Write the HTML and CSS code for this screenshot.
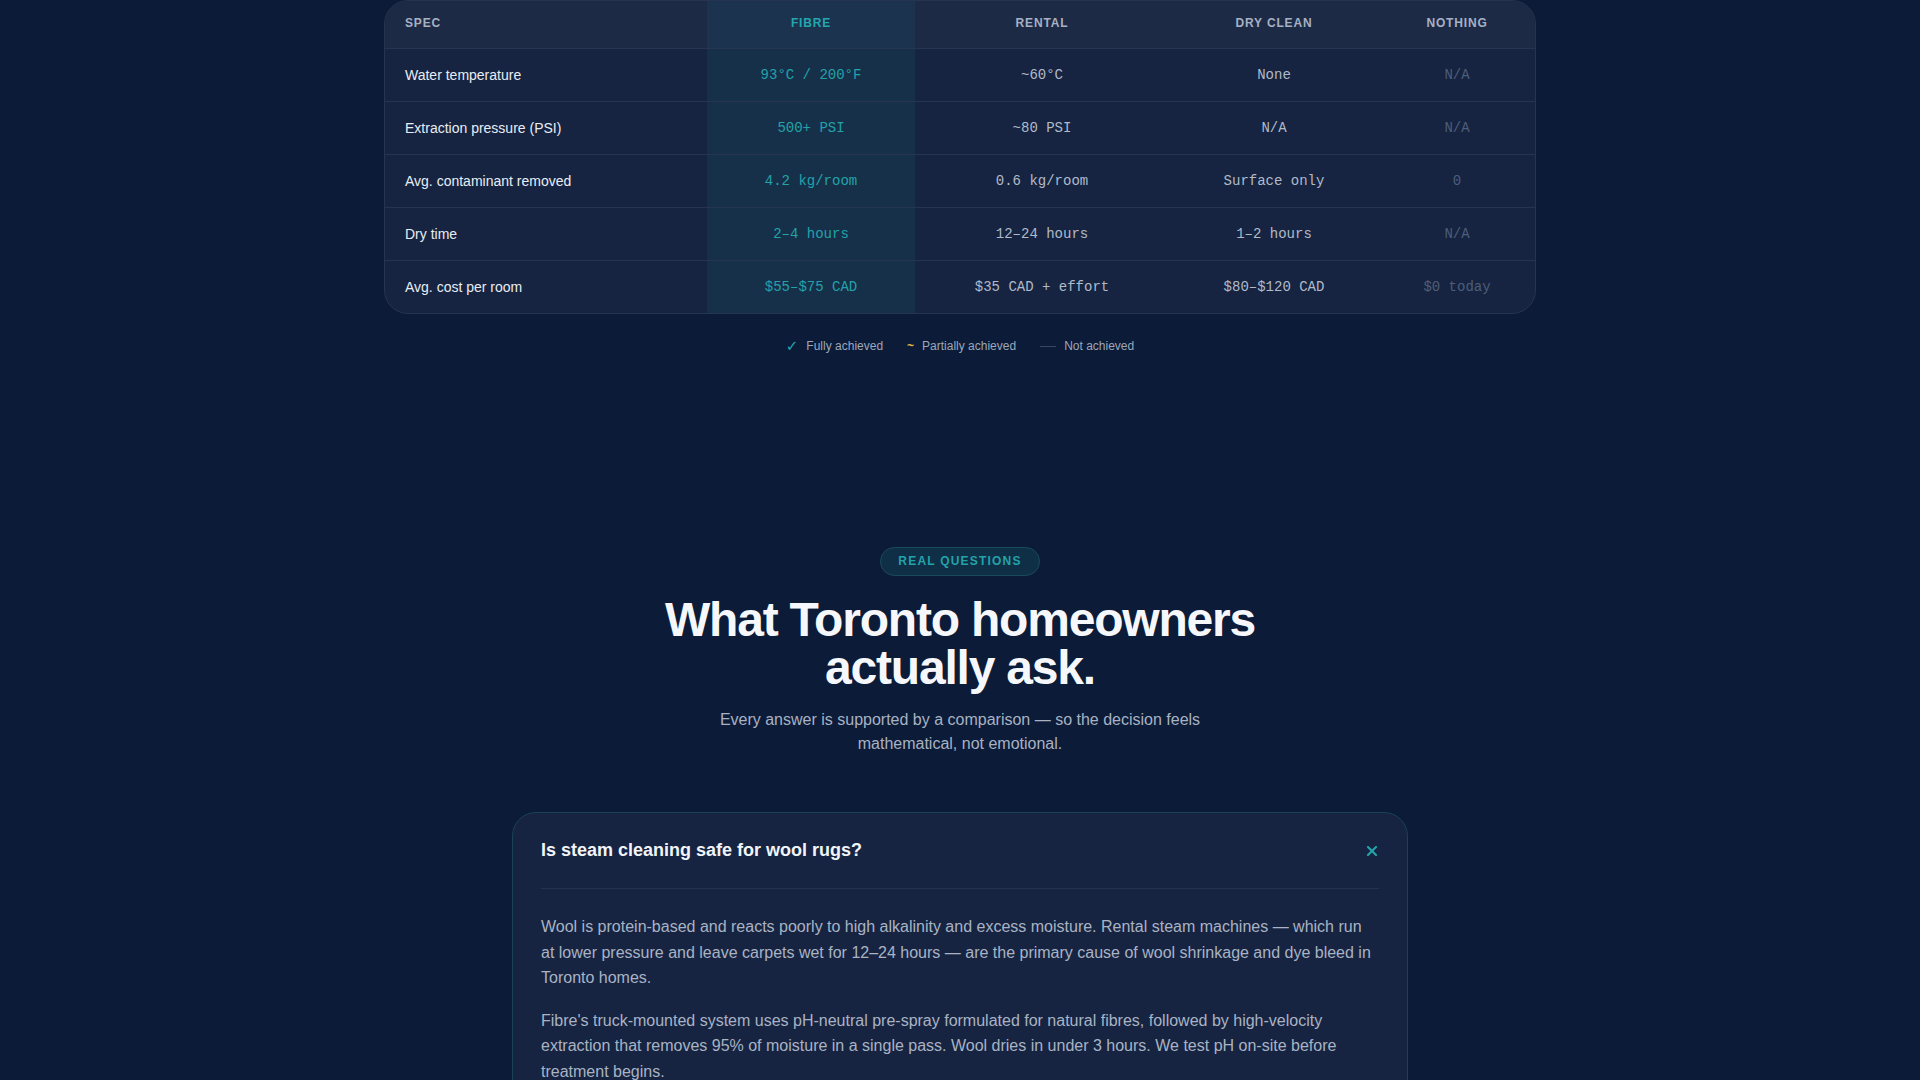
FILE: index.html
```html
<!DOCTYPE html>
<html lang="en">
<head>
  <meta charset="utf-8" />
  <meta name="viewport" content="width=device-width,initial-scale=1" />
  <title>Fibre — Compare &amp; FAQ</title>
  <link rel="stylesheet" href="styles.css">
</head>
<body>
  <!-- Spec comparison -->
  <section class="compare">
    <div class="table-wrap">
      <table class="spec-table">
        <colgroup>
          <col class="c-spec"><col class="c-fibre"><col class="c-rental"><col class="c-dry"><col class="c-none">
        </colgroup>
        <thead>
          <tr>
            <th class="spec">Spec</th>
            <th class="fib">Fibre</th>
            <th>Rental</th>
            <th>Dry clean</th>
            <th>Nothing</th>
          </tr>
        </thead>
        <tbody>
          <tr>
            <td class="spec">Water temperature</td>
            <td class="fib">93°C / 200°F</td>
            <td>~60°C</td>
            <td>None</td>
            <td class="dim">N/A</td>
          </tr>
          <tr>
            <td class="spec">Extraction pressure (PSI)</td>
            <td class="fib">500+ PSI</td>
            <td>~80 PSI</td>
            <td>N/A</td>
            <td class="dim">N/A</td>
          </tr>
          <tr>
            <td class="spec">Avg. contaminant removed</td>
            <td class="fib">4.2 kg/room</td>
            <td>0.6 kg/room</td>
            <td>Surface only</td>
            <td class="dim">0</td>
          </tr>
          <tr>
            <td class="spec">Dry time</td>
            <td class="fib">2–4 hours</td>
            <td>12–24 hours</td>
            <td>1–2 hours</td>
            <td class="dim">N/A</td>
          </tr>
          <tr>
            <td class="spec">Avg. cost per room</td>
            <td class="fib">$55–$75 CAD</td>
            <td>$35 CAD + effort</td>
            <td>$80–$120 CAD</td>
            <td class="dim">$0 today</td>
          </tr>
        </tbody>
      </table>
    </div>

    <div class="legend">
      <span class="legend-item"><span class="mark full">✓</span>Fully achieved</span>
      <span class="legend-item"><span class="mark part">~</span>Partially achieved</span>
      <span class="legend-item"><span class="mark none"></span>Not achieved</span>
    </div>
  </section>

  <!-- FAQ -->
  <section class="faq">
    <div class="faq-head">
      <span class="badge">Real questions</span>
      <h2>What Toronto homeowners<br>actually ask.</h2>
      <p class="lead">Every answer is supported by a comparison — so the decision feels mathematical, not emotional.</p>
    </div>

    <div class="faq-item open">
      <div class="faq-q">
        <h3>Is steam cleaning safe for wool rugs?</h3>
        <button class="faq-toggle" aria-label="Close">
          <svg width="10" height="10" viewBox="0 0 10 10"><path d="M1 1L9 9M9 1L1 9" stroke="currentColor" stroke-width="2" stroke-linecap="square"/></svg>
        </button>
      </div>
      <div class="faq-a">
        <p>Wool is protein-based and reacts poorly to high alkalinity and excess moisture. Rental steam machines — which run at lower pressure and leave carpets wet for 12–24 hours — are the primary cause of wool shrinkage and dye bleed in Toronto homes.</p>
        <p>Fibre's truck-mounted system uses pH-neutral pre-spray formulated for natural fibres, followed by high-velocity extraction that removes 95% of moisture in a single pass. Wool dries in under 3 hours. We test pH on-site before treatment begins.</p>
      </div>
    </div>
  </section>
</body>
</html>
```

FILE: styles.css
```css
html,body{margin:0;background:#0c1b38;font-family:"Liberation Sans",Arial,sans-serif;color:#e6ebf2}

/* comparison table */
.compare{width:1152px;margin:0 auto;padding-bottom:96px}
.table-wrap{border:1px solid #26344f;border-radius:24px;overflow:hidden;background:#162441}
.spec-table{width:100%;border-collapse:collapse;table-layout:fixed}
.c-spec{width:322px}.c-fibre{width:208px}.c-rental{width:254px}.c-dry{width:210px}.c-none{width:156px}
.spec-table th{background:#1d2a46;padding:13px 20px 16px;line-height:18px;font-size:12px;font-weight:700;letter-spacing:.07em;text-transform:uppercase;color:#a6b1c3;text-align:center;border-bottom:1px solid #27354f}
.spec-table td{padding:16px 20px;line-height:20px;font-size:14px;text-align:center;font-family:"Liberation Mono","Courier New",monospace;color:#b1bac9;border-bottom:1px solid #26344f}
.spec-table tbody tr:last-child td{border-bottom:0}
.spec-table .spec{text-align:left;font-family:"Liberation Sans",Arial,sans-serif;color:#e8edf4}
.spec-table th.spec{color:#a6b1c3}
.spec-table th.fib{background:#1c3350;color:#23a6ad}
.spec-table td.fib{background:#16304a;color:#23a2a9}
.spec-table td.dim{color:#4e5d78}

.legend{display:flex;justify-content:center;gap:24px;margin-top:23px;font-size:12px;line-height:18px;color:#9ca7b9}
.legend-item{display:flex;align-items:center;gap:8px}
.mark{display:inline-block;text-align:center}
.mark.full{color:#23a6ad;font-size:15px;font-family:"DejaVu Sans",sans-serif}
.mark.part{color:#e2b441;font-weight:700}
.mark.none{width:16px;height:1px;background:#3a4761}

/* FAQ */
.faq{padding-top:96px;padding-bottom:80px}
.faq-head{display:flex;flex-direction:column;align-items:center;text-align:center}
.badge{padding:6px 17px;line-height:15px;border:1px solid #1a4a5e;border-radius:999px;background:#0f2f46;color:#23a2a9;font-size:12px;font-weight:700;letter-spacing:.1em;text-transform:uppercase}
.faq-head h2{margin:20px 0 0;font-size:48px;line-height:48px;font-weight:700;letter-spacing:-.025em;color:#f5f7fb}
.lead{margin:16px 0 0;max-width:520px;font-size:16px;line-height:24px;color:#a8b2c3}

.faq-item{width:896px;box-sizing:border-box;margin:56px auto 0;border:1px solid #1b4156;border-radius:24px;background:#162441}
.faq-q{display:flex;align-items:center;justify-content:space-between;margin:0 28px;padding:24px 0;border-bottom:1px solid #24324c}
.faq-q h3{margin:0;font-size:18px;line-height:27px;font-weight:700;color:#f1f4f9}
.faq-toggle{display:flex;margin-right:2px;padding:0;border:0;background:none;color:#22a6ad;cursor:pointer}
.faq-a{padding:25px 28px 28px}
.faq-a p{margin:0 0 17px;font-size:16px;line-height:1.6;color:#a9b3c4}
.faq-a p:last-child{margin-bottom:0}
```
